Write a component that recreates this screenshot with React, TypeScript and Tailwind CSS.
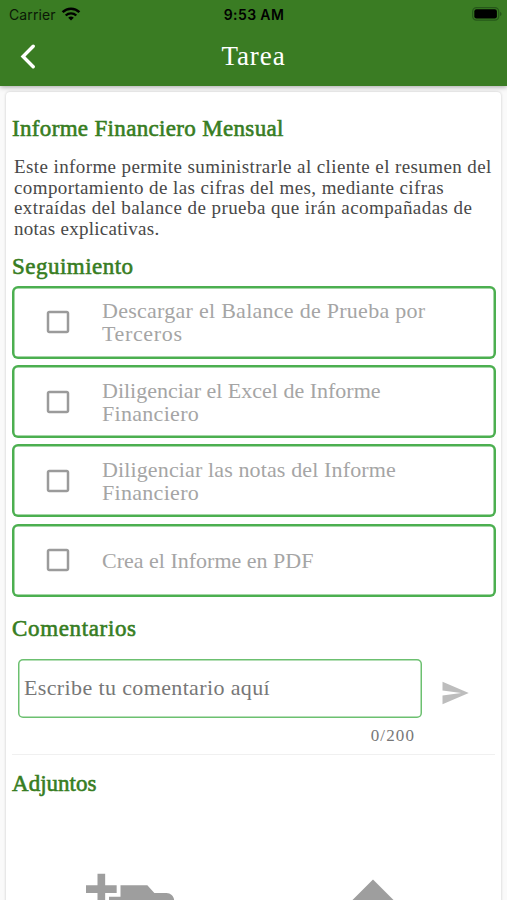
import { MdAddAPhoto, MdCheckBoxOutlineBlank, MdFileUpload, MdSend } from 'react-icons/md';

const heading =
  'whitespace-nowrap text-[23px] leading-[28px] text-[#377d22] [-webkit-text-stroke:0.6px_#377d22]';

type Line = { text: string; className: string };

const description: Line[] = [
  { text: 'Este informe permite suministrarle al cliente el resumen del', className: 'tracking-[0.4px]' },
  { text: 'comportamiento de las cifras del mes, mediante cifras', className: 'tracking-[0.39px]' },
  { text: 'extraídas del balance de prueba que irán acompañadas de', className: 'tracking-[0.43px]' },
  { text: 'notas explicativas.', className: 'tracking-[0.27px]' },
];

const tasks: Line[][] = [
  [
    { text: 'Descargar el Balance de Prueba por', className: 'tracking-[0.27px]' },
    { text: 'Terceros', className: 'tracking-[0.65px]' },
  ],
  [
    { text: 'Diligenciar el Excel de Informe', className: 'tracking-[0px]' },
    { text: 'Financiero', className: 'tracking-[0.3px]' },
  ],
  [
    { text: 'Diligenciar las notas del Informe', className: 'tracking-[0.13px]' },
    { text: 'Financiero', className: 'tracking-[0.3px]' },
  ],
  [{ text: 'Crea el Informe en PDF', className: 'tracking-[0px]' }],
];

function StatusBar() {
  return (
    <div className="grid h-7 grid-cols-3 items-center pl-[9px] pr-[5px] font-['Inter',sans-serif] text-[14px] text-black">
      <div className="flex items-center gap-[5px]">
        <span className="tracking-[0.1px] opacity-80">Carrier</span>
        <svg width="20" height="14" viewBox="0 0 20 14" fill="none" stroke="black">
          <path d="M1.6 5.2a12 12 0 0 1 16.8 0" strokeWidth="2.5" />
          <path d="M4.7 8.5a7.6 7.6 0 0 1 10.6 0" strokeWidth="2.4" />
          <path d="M10 13.6 7.2 10.8a4 4 0 0 1 5.6 0Z" fill="black" stroke="none" />
        </svg>
      </div>
      <span className="pr-[3px] text-center font-semibold tracking-[0.4px]">9:53 AM</span>
      <svg className="justify-self-end" width="30" height="14" viewBox="0 0 30 14">
        <rect x="0.7" y="0.7" width="26" height="12.4" rx="3.8" fill="none" stroke="#26581a" strokeWidth="1.3" />
        <rect x="2.3" y="2.3" width="22.6" height="9.2" rx="2.2" fill="black" />
        <path d="M28 4.8q1.6.7 1.6 2.1T28 9.1Z" fill="#26581a" />
      </svg>
    </div>
  );
}

export default function App() {
  return (
    <div className="flex h-[900px] w-[507px] flex-col overflow-hidden bg-[#fafafa] font-['Liberation_Serif',serif]">
      <header className="z-10 h-[86px] shrink-0 bg-[#3a7c23] shadow-[0_1px_5px_rgba(0,0,0,0.35)]">
        <StatusBar />
        <div className="grid h-[56px] grid-cols-[56px_1fr_56px] items-center">
          <svg className="ml-[20px]" width="16" height="25" viewBox="0 0 16 25" fill="none" stroke="white" strokeWidth="3.4" strokeLinecap="round">
            <path d="M13.2 2.2 3 12.5l10.2 10.3" />
          </svg>
          <h1 className="text-center text-[27px] leading-none tracking-[0.9px] text-white">Tarea</h1>
        </div>
      </header>

      <main className="mx-[6px] mt-[6px] h-[900px] shrink-0 rounded-[4px] bg-white px-[6px] pt-[23px] shadow-[0_0_3px_rgba(0,0,0,0.2)]">
        <h2 className={heading}><span className="tracking-[0.33px]">Informe Financiero Mensual</span></h2>
        <div className="mt-[14px] flex flex-col items-start pl-[2px] text-[19px] leading-[20.7px] text-[#484848]">
          {description.map((line) => (
            <span key={line.text} className={`whitespace-nowrap ${line.className}`}>{line.text}</span>
          ))}
        </div>

        <h2 className={`mt-[13px] ${heading}`}><span className="tracking-[0.48px]">Seguimiento</span></h2>
        <ul className="mt-[5px] flex flex-col gap-[6.3px]">
          {tasks.map((lines) => (
            <li
              key={lines[0].text}
              className="flex h-[73px] w-[484px] items-center rounded-[6px] pl-[31px] text-[22px] leading-[23px] text-[#a5a5a5] shadow-[inset_0_0_0_2.5px_#4caf50]"
            >
              <MdCheckBoxOutlineBlank className="size-[30px] shrink-0 text-[#9b9b9b]" />
              <div className="ml-[29px] flex flex-col items-start">
                {lines.map((line) => (
                  <span key={line.text} className={`whitespace-nowrap ${line.className}`}>{line.text}</span>
                ))}
              </div>
            </li>
          ))}
        </ul>

        <h2 className={`mt-[18px] ${heading}`}><span className="tracking-[0.65px]">Comentarios</span></h2>
        <div className="mt-[16px] flex items-center pl-[6px]">
          <div className="h-[59px] w-[404px] rounded-[5px] pl-[6px] pt-[16px] text-[22px] leading-[26px] text-[#777] shadow-[inset_0_0_0_1.5px_#6cc070]">
            <span className="tracking-[0.37px]">Escribe tu comentario aquí</span>
          </div>
          <MdSend className="ml-[18px] mt-[9px] size-[30px] text-[#bdbdbd]" />
        </div>
        <div className="mt-[8px] pr-[80px] text-right text-[17px] leading-[20px] text-[#777]">
          <span className="tracking-[1.1px]">0/200</span>
        </div>
        <hr className="mt-[8px] border-[#f0f0f0]" />

        <h2 className={`mt-[15px] ${heading}`}><span className="tracking-[0.02px]">Adjuntos</span></h2>
        <div className="mt-[72px] flex pl-[74px] text-[#9e9e9e]">
          <MdAddAPhoto className="size-[92px]" />
          <MdFileUpload className="-mt-[2px] ml-[149px] size-[92px]" />
        </div>
      </main>
    </div>
  );
}
